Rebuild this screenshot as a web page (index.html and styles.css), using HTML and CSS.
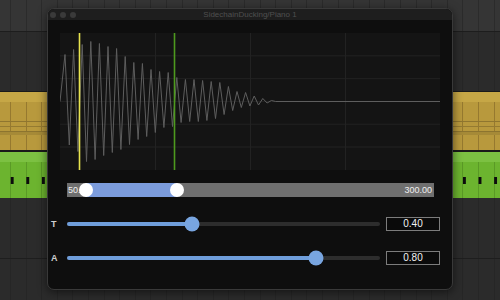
FILE: index.html
```html
<!DOCTYPE html>
<html>
<head>
<meta charset="utf-8">
<link rel="stylesheet" href="styles.css">
</head>
<body>
<div class="daw">
  <div class="ruler"></div>
  <div class="lane lane-top"></div>
  <div class="clip clip-yellow"><div class="clip-head"></div><div class="clip-body"></div></div>
  <div class="clip clip-green"><div class="clip-head"></div><div class="clip-body"></div></div>
  <div class="lane lane-mid"></div>
  <div class="lane lane-bottom"></div>
</div>

<div class="window">
  <div class="titlebar">
    <div class="lights"><span class="dot"></span><span class="dot"></span><span class="dot"></span></div>
    <div class="title">SidechainDucking/Piano 1</div>
    <div></div>
  </div>

  <div class="plot">
    <svg class="graph" width="380" height="137" viewBox="60 33 380 137">
      <g class="grid">
        <line x1="60" y1="55.8" x2="440" y2="55.8"/>
        <line x1="60" y1="78.6" x2="440" y2="78.6"/>
        <line x1="60" y1="101.4" x2="440" y2="101.4"/>
        <line x1="60" y1="124.2" x2="440" y2="124.2"/>
        <line x1="60" y1="147" x2="440" y2="147"/>
        <line x1="155.5" y1="33" x2="155.5" y2="170"/>
        <line x1="250.5" y1="33" x2="250.5" y2="170"/>
        <line x1="345.5" y1="33" x2="345.5" y2="170"/>
      </g>
      <polyline class="wave" points="60,101.5 65,54.5 69.3,145 73.6,49.5 77.9,151.5 82.2,44.5 86.5,161.5 90.8,41.5 95.1,159.5 99.4,43.5 103.7,155.5 108,46.5 112.3,152.5 116.6,48.5 120.9,149.5 125.2,56.5 129.5,144.5 133.8,62.5 138.1,139.5 142.4,63.5 146.7,136.5 151,69.5 155.3,132.5 159.6,71.5 163.9,127.5 168.2,72.5 172.5,126.5 176.8,77.5 181.1,122.5 185.4,79.5 189.7,121.5 194,79.5 198.3,121.5 202.6,80.5 206.9,120.5 211.2,81.5 215.5,118.5 219.8,82.5 224.1,114.5 228.4,86.5 232.7,110.5 237,91.5 241.3,107.5 245.6,92.5 249.9,106 254.2,96 258.5,105 262.8,98.5 267.1,103 271.4,100.5 275.7,101.5 440,101.5"/>
      <line class="mark-yellow" x1="79.5" y1="33" x2="79.5" y2="170"/>
      <line class="mark-green" x1="174.5" y1="33" x2="174.5" y2="170"/>
    </svg>
  </div>

  <div class="range">
    <span class="range-text">50.00</span>
    <span class="range-text">300.00</span>
    <div class="range-fill" style="left:5.2%;width:24.8%"></div>
    <div class="range-thumb" style="left:5.2%"></div>
    <div class="range-thumb" style="left:30%"></div>
  </div>

  <div class="param">
    <span class="label">T</span>
    <div class="slider">
      <div class="fill" style="width:40%"></div>
      <div class="thumb" style="left:40%"></div>
    </div>
    <div class="value">0.40</div>
  </div>

  <div class="param">
    <span class="label">A</span>
    <div class="slider">
      <div class="fill" style="width:79.5%"></div>
      <div class="thumb" style="left:79.5%"></div>
    </div>
    <div class="value">0.80</div>
  </div>
</div>
</body>
</html>
```

FILE: styles.css
```css
* { box-sizing: border-box; }

body {
  margin: 0;
  width: 500px;
  height: 300px;
  overflow: hidden;
  position: relative;
  background: #2b2b2b;
  font-family: "Liberation Sans", Arial, sans-serif;
}

/* ---------- background arrangement ---------- */
.daw {
  display: flex;
  flex-direction: column;
  height: 300px;
}

.ruler {
  height: 32px;
  border-bottom: 1px solid #1d1d1d;
  background-color: #353535;
  background-image: repeating-linear-gradient(to right, transparent 0 10px, #2b2b2b 10px 11px, transparent 11px 15.6px);
}

.lane {
  background-color: #2b2b2b;
  background-image: repeating-linear-gradient(to right, transparent 0 10px, #262626 10px 11px, transparent 11px 15.6px);
}

.lane-top { height: 59px; }
.lane-mid { height: 61px; border-bottom: 1px solid #1e1e1e; }
.lane-bottom { flex: 1; }

.clip {
  display: flex;
  flex-direction: column;
}

.clip-yellow {
  height: 59px;
  border-top: 1px solid #1a1a1a;
}

.clip-yellow .clip-head {
  height: 10px;
  background: #c6a746;
}

.clip-yellow .clip-body {
  flex: 1;
  background-color: #b8993d;
  background-image:
    linear-gradient(to bottom, transparent 19px, #8f762f 19px 20px, transparent 20px 24px, #957b31 24px 25px, transparent 25px 29px, #8c742f 29px 30px, #a68a37 30px 33px, transparent 33px),
    repeating-linear-gradient(to right, transparent 0 10px, #96792f 10px 11px, transparent 11px 15.6px);
}

.clip-green {
  height: 48px;
  border-top: 2px solid #1a1a1a;
}

.clip-green .clip-head {
  height: 10px;
  background: #7cc142;
}

.clip-green .clip-body {
  flex: 1;
  background-color: #6cb42f;
  background-image:
    linear-gradient(to right, transparent 11px, #0c0c0c 11px 14px, transparent 14px),
    repeating-linear-gradient(to right, transparent 0 10px, #5a9a26 10px 11px, transparent 11px 15.6px);
  background-size: 15.6px 7px, auto;
  background-position: 0 15px, 0 0;
  background-repeat: repeat-x, repeat;
}

/* ---------- plugin window ---------- */
.window {
  position: absolute;
  left: 47px;
  top: 8px;
  width: 406px;
  height: 282px;
  border: 1px solid #393939;
  border-radius: 7px;
  background: #0e0e0e;
  overflow: hidden;
  box-shadow: 0 2px 10px rgba(0, 0, 0, 0.55);
  display: flex;
  flex-direction: column;
}

.titlebar {
  height: 11px;
  flex: none;
  background: #1e1e1e;
  display: grid;
  grid-template-columns: 1fr auto 1fr;
  align-items: center;
}

.lights {
  display: flex;
  gap: 4px;
  padding-left: 2px;
}

.dot {
  width: 6px;
  height: 6px;
  border-radius: 50%;
  background: #3a3a3a;
}

.title {
  font-size: 8px;
  line-height: 11px;
  color: #4f4f4f;
}

.plot {
  margin: 13px 12px 0;
  height: 137px;
  flex: none;
  background: #141414;
}

.graph { display: block; }

.grid line {
  stroke: #222222;
  stroke-width: 1;
}

.wave {
  fill: none;
  stroke: #5e5e5e;
  stroke-width: 1;
  stroke-linejoin: miter;
}

.mark-yellow { stroke: #e8e44e; stroke-width: 1.6; }
.mark-green { stroke: #4e9a1e; stroke-width: 1.6; }

.range {
  position: relative;
  margin: 13px 18px 0 19px;
  height: 14px;
  flex: none;
  background: #6f6f6f;
  display: flex;
  justify-content: space-between;
  align-items: center;
  padding: 0 2px 0 1px;
}

.range-text {
  font-size: 9px;
  color: #f0f0f0;
  line-height: 14px;
}

.range-fill {
  position: absolute;
  top: 0;
  bottom: 0;
  background: #7c9cdc;
}

.range-thumb {
  position: absolute;
  top: 50%;
  width: 14px;
  height: 14px;
  border-radius: 50%;
  background: #ffffff;
  transform: translate(-50%, -50%);
}

.param {
  display: flex;
  align-items: center;
  height: 14px;
  margin-top: 20px;
  padding: 0 12px 0 3px;
  flex: none;
}

.label {
  width: 16px;
  font-size: 9px;
  font-weight: bold;
  color: #cfcfcf;
}

.slider {
  flex: 1;
  height: 4px;
  border-radius: 2px;
  background: #2d2d2d;
  position: relative;
}

.fill {
  height: 100%;
  border-radius: 2px;
  background: #6f9edb;
}

.thumb {
  position: absolute;
  top: 50%;
  width: 15px;
  height: 15px;
  border-radius: 50%;
  background: #78a5e0;
  transform: translate(-50%, -50%);
}

.value {
  width: 54px;
  height: 14px;
  margin-left: 6px;
  border: 1px solid #7c7c7c;
  background: #0a0a0a;
  color: #f2f2f2;
  font-size: 10px;
  line-height: 12px;
  text-align: center;
}
```
